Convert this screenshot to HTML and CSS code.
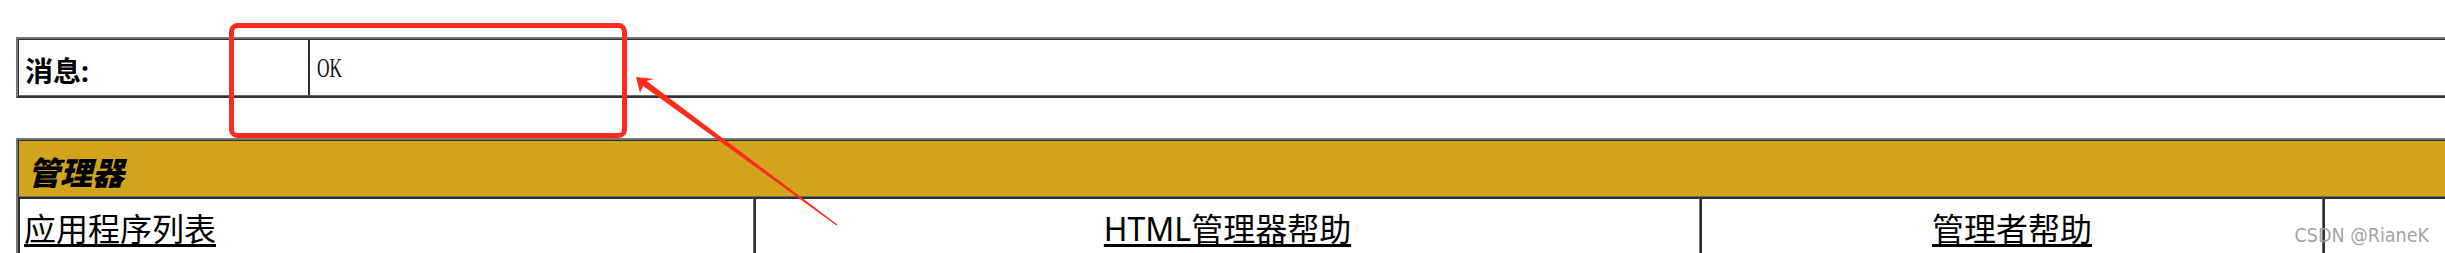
FILE: index.html
```html
<!DOCTYPE html>
<html lang="zh-CN">
<head>
<meta charset="utf-8">
<title>管理器</title>
<link rel="stylesheet" href="styles.css">
</head>
<body>
  <div class="msg">
    <div class="cell label">消息:</div>
    <div class="cell value"><span class="ok">OK</span></div>
  </div>

  <div class="mgr">
    <div class="cell head">管理器</div>
    <div class="cell data left"><a href="#">应用程序列表</a></div>
    <div class="cell data center"><a href="#">HTML管理器帮助</a></div>
    <div class="cell data center"><a href="#">管理者帮助</a></div>
    <div class="cell data last"></div>
  </div>

  <div class="watermark">CSDN @RianeK</div>

  <svg class="annot" width="2445" height="253" viewBox="0 0 2445 253" aria-hidden="true">
    <rect x="231.5" y="25.5" width="393" height="110" rx="6" ry="6" fill="none" stroke="#fe2a1c" stroke-width="5"/>
    <polygon fill="#fe2a1c" points="636,77 654,79 646.7,81.1 837.4,224.4 836.6,225.6 643.1,85.9 640,93"/>
  </svg>
</body>
</html>
```

FILE: styles.css
```css
html, body {
  overflow: hidden;
}

body {
  margin: 0;
  padding: 37px 0 0 16px;
  background: #ffffff;
  color: #000000;
  font-family: "Noto Sans", "Noto Sans CJK SC", sans-serif;
  position: relative;
  height: 253px;
  box-sizing: border-box;
}

.msg,
.mgr {
  box-sizing: border-box;
  border: 2px solid;
  border-right: none;
  border-color: #777777 #333333 #333333 #777777;
  display: grid;
}

.msg {
  grid-template-columns: 291px 1fr;
}

.mgr {
  margin-top: 40px;
  grid-template-columns: 736px 946px 623px 1fr;
}

.cell {
  box-sizing: border-box;
  border: 1px solid;
  border-color: #2e2e2e #6a6a6a #6a6a6a #2e2e2e;
  height: 57px;
  display: flex;
  align-items: center;
  min-width: 0;
}

.msg .value,
.mgr .head,
.mgr .last {
  border-right: none;
}

.label {
  font-size: 28px;
  font-weight: bold;
  padding: 5px 0 0 6px;
  border-right-color: #2e2e2e;
}

.value {
  padding-left: 7px;
}

.ok {
  display: inline-block;
  font-family: "Liberation Serif", serif;
  font-size: 28px;
  transform: scaleX(0.62);
  transform-origin: left center;
  color: #111111;
}

.head {
  grid-column: 1 / -1;
  background: #d2a41c;
  font-size: 32px;
  font-weight: 900;
  font-style: italic;
  padding: 4px 0 0 9px;
}

.data {
  height: 58px;
  border-top-width: 2px;
  border-left-width: 2px;
  font-size: 32px;
}

.data a {
  color: #000000;
  text-decoration: underline;
  text-decoration-thickness: 3px;
  text-underline-offset: 3px;
}

.left {
  padding-left: 4px;
}

.center {
  justify-content: center;
}

.watermark {
  position: absolute;
  right: 16px;
  top: 226px;
  font-family: "DejaVu Sans Condensed", "DejaVu Sans", sans-serif;
  font-stretch: condensed;
  font-size: 19.5px;
  line-height: 20px;
  color: rgba(120, 120, 120, 0.7);
  text-shadow: 0 0 1px rgba(255, 255, 255, 0.8);
  white-space: nowrap;
}

.annot {
  position: absolute;
  left: 0;
  top: 0;
  pointer-events: none;
}
```
